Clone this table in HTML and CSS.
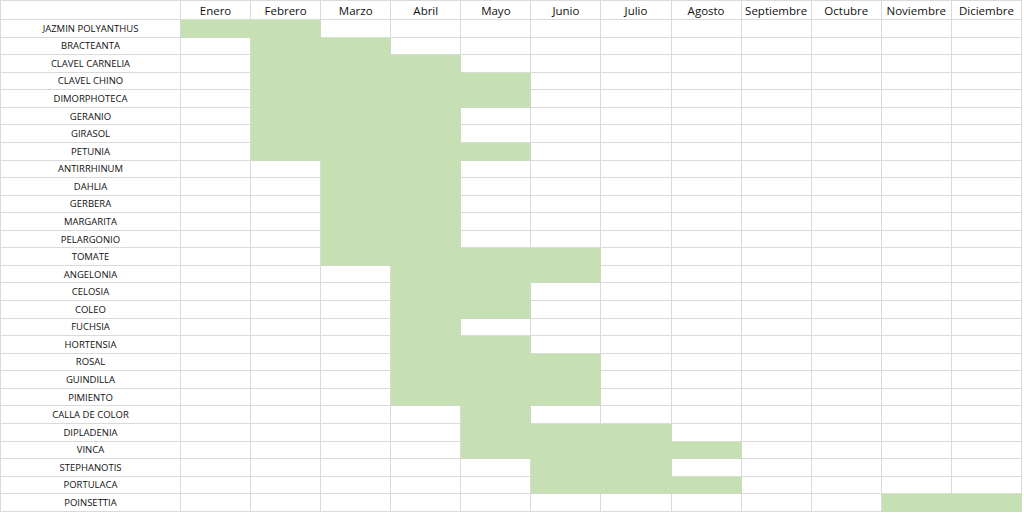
FILE: index.html
```html
<!DOCTYPE html>
<html lang="es">
<head>
<meta charset="utf-8">
<title>Calendario de floración</title>
<link rel="stylesheet" href="styles.css">
</head>
<body>
<div class="sheet">
<div class="c h"></div><div class="c h">Enero</div><div class="c h">Febrero</div><div class="c h">Marzo</div><div class="c h">Abril</div><div class="c h">Mayo</div><div class="c h">Junio</div><div class="c h">Julio</div><div class="c h">Agosto</div><div class="c h">Septiembre</div><div class="c h">Octubre</div><div class="c h">Noviembre</div><div class="c h">Diciembre</div>
<div class="c n">JAZMIN POLYANTHUS</div><div class="c g"></div><div class="c g"></div><div class="c"></div><div class="c"></div><div class="c"></div><div class="c"></div><div class="c"></div><div class="c"></div><div class="c"></div><div class="c"></div><div class="c"></div><div class="c"></div>
<div class="c n">BRACTEANTA</div><div class="c"></div><div class="c g"></div><div class="c g"></div><div class="c"></div><div class="c"></div><div class="c"></div><div class="c"></div><div class="c"></div><div class="c"></div><div class="c"></div><div class="c"></div><div class="c"></div>
<div class="c n">CLAVEL CARNELIA</div><div class="c"></div><div class="c g"></div><div class="c g"></div><div class="c g"></div><div class="c"></div><div class="c"></div><div class="c"></div><div class="c"></div><div class="c"></div><div class="c"></div><div class="c"></div><div class="c"></div>
<div class="c n">CLAVEL CHINO</div><div class="c"></div><div class="c g"></div><div class="c g"></div><div class="c g"></div><div class="c g"></div><div class="c"></div><div class="c"></div><div class="c"></div><div class="c"></div><div class="c"></div><div class="c"></div><div class="c"></div>
<div class="c n">DIMORPHOTECA</div><div class="c"></div><div class="c g"></div><div class="c g"></div><div class="c g"></div><div class="c g"></div><div class="c"></div><div class="c"></div><div class="c"></div><div class="c"></div><div class="c"></div><div class="c"></div><div class="c"></div>
<div class="c n">GERANIO</div><div class="c"></div><div class="c g"></div><div class="c g"></div><div class="c g"></div><div class="c"></div><div class="c"></div><div class="c"></div><div class="c"></div><div class="c"></div><div class="c"></div><div class="c"></div><div class="c"></div>
<div class="c n">GIRASOL</div><div class="c"></div><div class="c g"></div><div class="c g"></div><div class="c g"></div><div class="c"></div><div class="c"></div><div class="c"></div><div class="c"></div><div class="c"></div><div class="c"></div><div class="c"></div><div class="c"></div>
<div class="c n">PETUNIA</div><div class="c"></div><div class="c g"></div><div class="c g"></div><div class="c g"></div><div class="c g"></div><div class="c"></div><div class="c"></div><div class="c"></div><div class="c"></div><div class="c"></div><div class="c"></div><div class="c"></div>
<div class="c n">ANTIRRHINUM</div><div class="c"></div><div class="c"></div><div class="c g"></div><div class="c g"></div><div class="c"></div><div class="c"></div><div class="c"></div><div class="c"></div><div class="c"></div><div class="c"></div><div class="c"></div><div class="c"></div>
<div class="c n">DAHLIA</div><div class="c"></div><div class="c"></div><div class="c g"></div><div class="c g"></div><div class="c"></div><div class="c"></div><div class="c"></div><div class="c"></div><div class="c"></div><div class="c"></div><div class="c"></div><div class="c"></div>
<div class="c n">GERBERA</div><div class="c"></div><div class="c"></div><div class="c g"></div><div class="c g"></div><div class="c"></div><div class="c"></div><div class="c"></div><div class="c"></div><div class="c"></div><div class="c"></div><div class="c"></div><div class="c"></div>
<div class="c n">MARGARITA</div><div class="c"></div><div class="c"></div><div class="c g"></div><div class="c g"></div><div class="c"></div><div class="c"></div><div class="c"></div><div class="c"></div><div class="c"></div><div class="c"></div><div class="c"></div><div class="c"></div>
<div class="c n">PELARGONIO</div><div class="c"></div><div class="c"></div><div class="c g"></div><div class="c g"></div><div class="c"></div><div class="c"></div><div class="c"></div><div class="c"></div><div class="c"></div><div class="c"></div><div class="c"></div><div class="c"></div>
<div class="c n">TOMATE</div><div class="c"></div><div class="c"></div><div class="c g"></div><div class="c g"></div><div class="c g"></div><div class="c g"></div><div class="c"></div><div class="c"></div><div class="c"></div><div class="c"></div><div class="c"></div><div class="c"></div>
<div class="c n">ANGELONIA</div><div class="c"></div><div class="c"></div><div class="c"></div><div class="c g"></div><div class="c g"></div><div class="c g"></div><div class="c"></div><div class="c"></div><div class="c"></div><div class="c"></div><div class="c"></div><div class="c"></div>
<div class="c n">CELOSIA</div><div class="c"></div><div class="c"></div><div class="c"></div><div class="c g"></div><div class="c g"></div><div class="c"></div><div class="c"></div><div class="c"></div><div class="c"></div><div class="c"></div><div class="c"></div><div class="c"></div>
<div class="c n">COLEO</div><div class="c"></div><div class="c"></div><div class="c"></div><div class="c g"></div><div class="c g"></div><div class="c"></div><div class="c"></div><div class="c"></div><div class="c"></div><div class="c"></div><div class="c"></div><div class="c"></div>
<div class="c n">FUCHSIA</div><div class="c"></div><div class="c"></div><div class="c"></div><div class="c g"></div><div class="c"></div><div class="c"></div><div class="c"></div><div class="c"></div><div class="c"></div><div class="c"></div><div class="c"></div><div class="c"></div>
<div class="c n">HORTENSIA</div><div class="c"></div><div class="c"></div><div class="c"></div><div class="c g"></div><div class="c g"></div><div class="c"></div><div class="c"></div><div class="c"></div><div class="c"></div><div class="c"></div><div class="c"></div><div class="c"></div>
<div class="c n">ROSAL</div><div class="c"></div><div class="c"></div><div class="c"></div><div class="c g"></div><div class="c g"></div><div class="c g"></div><div class="c"></div><div class="c"></div><div class="c"></div><div class="c"></div><div class="c"></div><div class="c"></div>
<div class="c n">GUINDILLA</div><div class="c"></div><div class="c"></div><div class="c"></div><div class="c g"></div><div class="c g"></div><div class="c g"></div><div class="c"></div><div class="c"></div><div class="c"></div><div class="c"></div><div class="c"></div><div class="c"></div>
<div class="c n">PIMIENTO</div><div class="c"></div><div class="c"></div><div class="c"></div><div class="c g"></div><div class="c g"></div><div class="c g"></div><div class="c"></div><div class="c"></div><div class="c"></div><div class="c"></div><div class="c"></div><div class="c"></div>
<div class="c n">CALLA DE COLOR</div><div class="c"></div><div class="c"></div><div class="c"></div><div class="c"></div><div class="c g"></div><div class="c"></div><div class="c"></div><div class="c"></div><div class="c"></div><div class="c"></div><div class="c"></div><div class="c"></div>
<div class="c n">DIPLADENIA</div><div class="c"></div><div class="c"></div><div class="c"></div><div class="c"></div><div class="c g"></div><div class="c g"></div><div class="c g"></div><div class="c"></div><div class="c"></div><div class="c"></div><div class="c"></div><div class="c"></div>
<div class="c n">VINCA</div><div class="c"></div><div class="c"></div><div class="c"></div><div class="c"></div><div class="c g"></div><div class="c g"></div><div class="c g"></div><div class="c g"></div><div class="c"></div><div class="c"></div><div class="c"></div><div class="c"></div>
<div class="c n">STEPHANOTIS</div><div class="c"></div><div class="c"></div><div class="c"></div><div class="c"></div><div class="c"></div><div class="c g"></div><div class="c g"></div><div class="c"></div><div class="c"></div><div class="c"></div><div class="c"></div><div class="c"></div>
<div class="c n">PORTULACA</div><div class="c"></div><div class="c"></div><div class="c"></div><div class="c"></div><div class="c"></div><div class="c g"></div><div class="c g"></div><div class="c g"></div><div class="c"></div><div class="c"></div><div class="c"></div><div class="c"></div>
<div class="c n">POINSETTIA</div><div class="c"></div><div class="c"></div><div class="c"></div><div class="c"></div><div class="c"></div><div class="c"></div><div class="c"></div><div class="c"></div><div class="c"></div><div class="c"></div><div class="c g"></div><div class="c g"></div>
</div>
</body>
</html>
```

FILE: styles.css
```css
html, body {
  margin: 0;
  padding: 0;
  background: #ffffff;
}

body {
  font-family: "Open Sans", "Liberation Sans", sans-serif;
  color: #1a1a1a;
  overflow: hidden;
}

.sheet {
  display: grid;
  grid-template-columns: 180px repeat(12, 70.08px);
  grid-template-rows: 19px repeat(28, 17.57px);
  width: max-content;
  border-top: 1px solid #dadada;
  border-left: 1px solid #dadada;
}

.c {
  box-sizing: border-box;
  border-right: 1px solid #dadada;
  border-bottom: 1px solid #dadada;
  background: #ffffff;
  display: flex;
  align-items: center;
  justify-content: center;
  white-space: nowrap;
  overflow: hidden;
}

.h {
  font-size: 11.5px;
  align-items: flex-end;
  line-height: 16px;
  color: #111111;
}

.n {
  font-size: 9.5px;
  line-height: 12px;
  padding-top: 1px;
  color: #111111;
}

.g {
  background: #c6e0b4;
  border-right-color: #c6e0b4;
  border-bottom-color: #c6e0b4;
}
```
